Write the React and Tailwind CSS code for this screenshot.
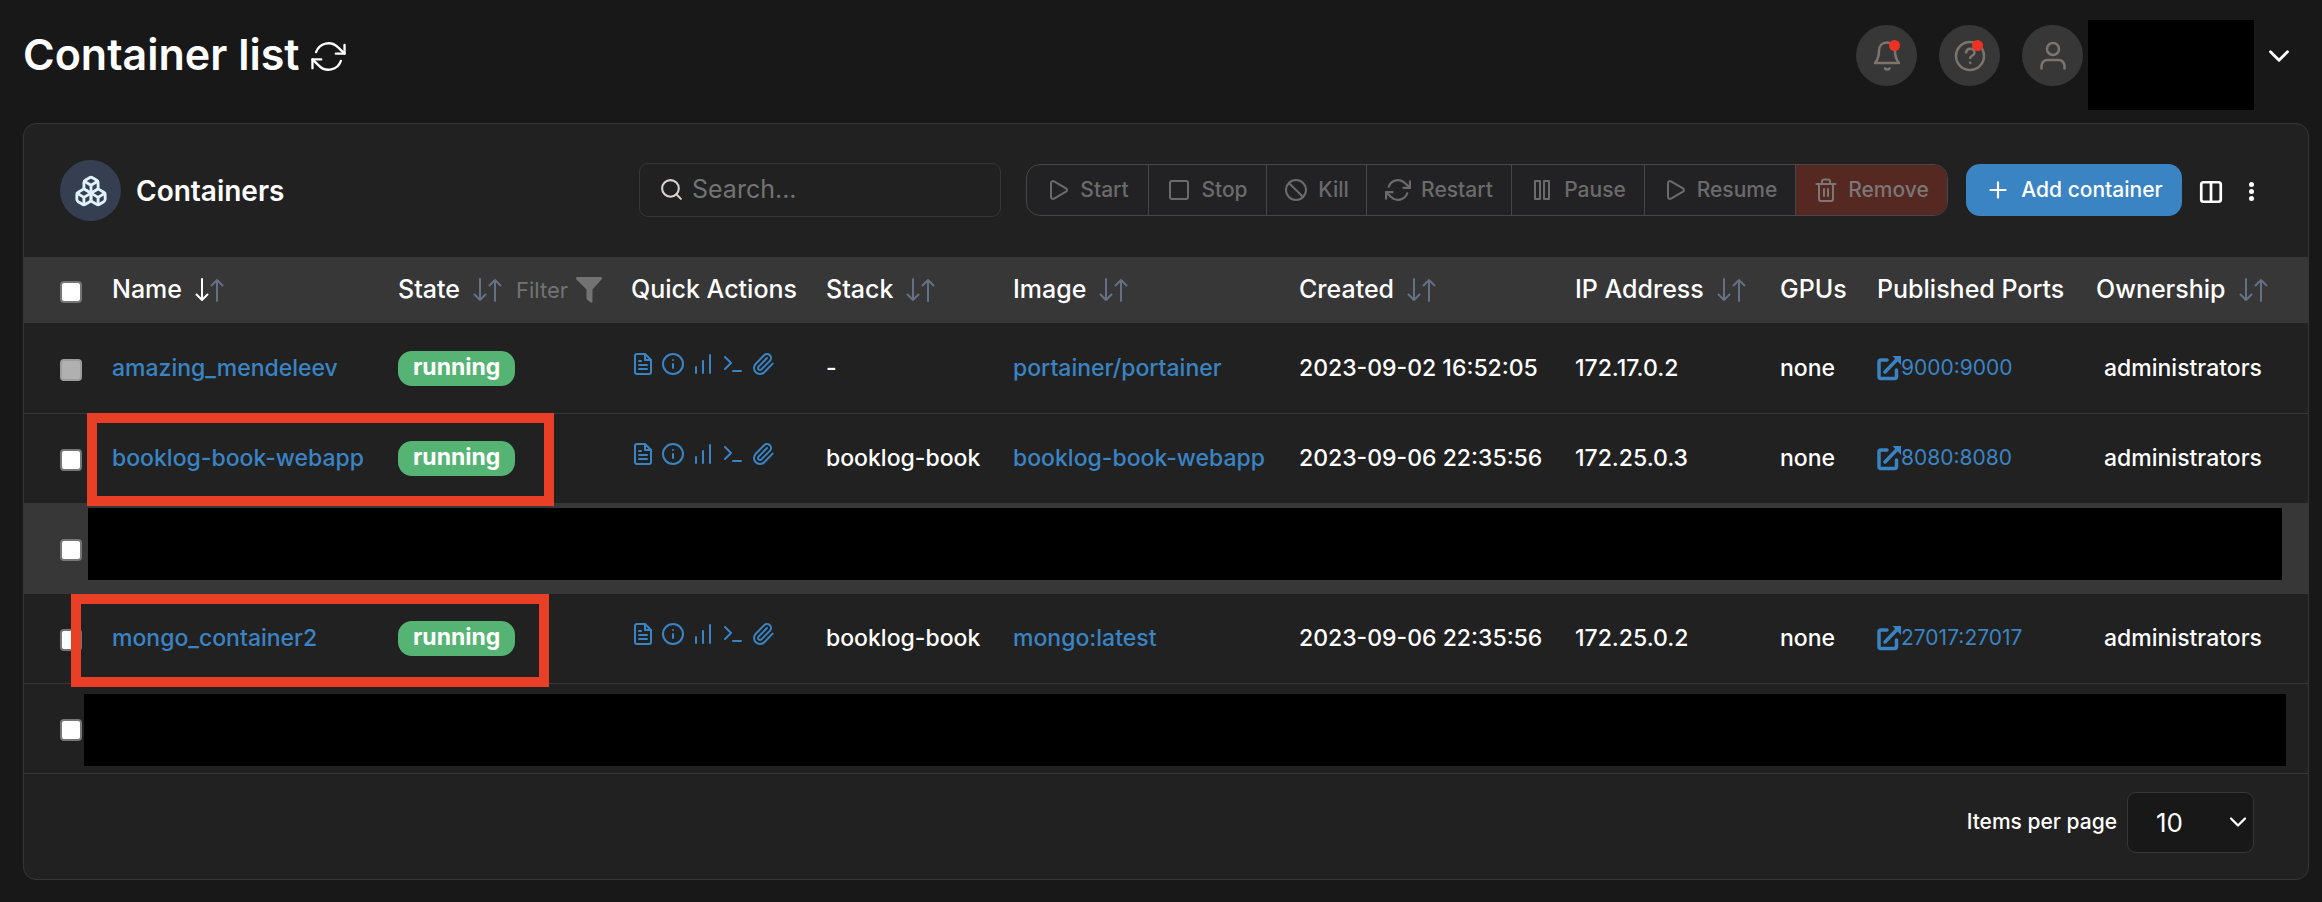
import { useState } from 'react';
import {
  Ban,
  Boxes,
  ChartNoAxesColumnIncreasing,
  ChevronDown,
  Columns2,
  Info,
  Paperclip,
  Play,
  Plus,
  Search,
  Square,
  Terminal,
} from 'lucide-react';

const CONTAINERS = [
  {
    id: 1,
    name: 'amazing_mendeleev',
    stack: '-',
    image: 'portainer/portainer',
    created: '2023-09-02 16:52:05',
    ip: '172.17.0.2',
    ports: '9000:9000',
    locked: true,
  },
  {
    id: 2,
    name: 'booklog-book-webapp',
    stack: 'booklog-book',
    image: 'booklog-book-webapp',
    created: '2023-09-06 22:35:56',
    ip: '172.25.0.3',
    ports: '8080:8080',
    mark: 'top-0 left-[63px] w-[467px]',
  },
  { id: 3, redacted: 'top-[5px] left-16 right-[26px]', active: true },
  {
    id: 4,
    name: 'mongo_container2',
    stack: 'booklog-book',
    image: 'mongo:latest',
    created: '2023-09-06 22:35:56',
    ip: '172.25.0.2',
    ports: '27017:27017',
    mark: 'top-px left-[47px] w-[478px]',
  },
  { id: 5, redacted: 'top-[11px] left-[60px] right-[22px]' },
];

function RefreshIcon({ size, strokeWidth = 2 }) {
  return (
    <svg width={size} height={size} viewBox="0 0 24 24" fill="none" stroke="currentColor" strokeWidth={strokeWidth} strokeLinecap="round" strokeLinejoin="round">
      <path d="M23 4v6h-6" />
      <path d="M1 20v-6h6" />
      <path d="M3.5 9a9 9 0 0 1 14.9-3.4L23 10" />
      <path d="M1 14l4.6 4.4A9 9 0 0 0 20.5 15" />
    </svg>
  );
}

function TrashIcon() {
  return (
    <svg width="24" height="24" viewBox="0 0 24 24" fill="none" stroke="currentColor" strokeWidth="2" strokeLinecap="round" strokeLinejoin="round">
      <path d="M2.5 6h19" />
      <path d="M19 6v15a2 2 0 0 1-2 2H7a2 2 0 0 1-2-2V6" />
      <path d="M8 6V3.5a2 2 0 0 1 2-2h4a2 2 0 0 1 2 2V6" />
      <path d="M10 11v7M14 11v7" />
    </svg>
  );
}

function PauseBars() {
  return (
    <svg width="24" height="24" viewBox="0 0 24 24" fill="none" stroke="currentColor" strokeWidth="2" strokeLinejoin="round">
      <rect x="5" y="3" width="5" height="18" />
      <rect x="14" y="3" width="5" height="18" />
    </svg>
  );
}

function LogsIcon() {
  return (
    <svg width="24" height="24" viewBox="0 0 24 24" fill="none" stroke="currentColor" strokeWidth="2" strokeLinecap="round" strokeLinejoin="round">
      <path d="M14 2H6a2 2 0 0 0-2 2v16a2 2 0 0 0 2 2h12a2 2 0 0 0 2-2V8z" />
      <path d="M14 2v6h6" />
      <path d="M8 9h2M8 13h8M8 17h8" />
    </svg>
  );
}

function BellIcon() {
  return (
    <svg width="32" height="32" viewBox="0 0 32 32" fill="none" stroke="currentColor" strokeWidth="2.5" strokeLinecap="round" strokeLinejoin="round">
      <path d="M16 2.5c-5 0-8 3.5-8 8.500 0 6-1.500 9-4 12h24c-2.500-3-4-6-4-12 0-5-3-8.500-8-8.500z" />
      <path d="M14 28.5c1.300 1.300 3.200 1.300 4.500 0" />
    </svg>
  );
}

function HelpIcon() {
  return (
    <svg width="32" height="32" viewBox="0 0 32 32" fill="none" stroke="currentColor" strokeWidth="2.5" strokeLinecap="round" strokeLinejoin="round">
      <circle cx="16" cy="16" r="14" />
      <path d="M12 12.500c.5-2.500 2-3.700 4.200-3.700 2.500 0 4.300 1.500 4.300 3.900 0 3-4.300 3-4.300 5.300" />
      <path d="M16.200 22.800v.1" />
    </svg>
  );
}

function UserIcon() {
  return (
    <svg width="32" height="32" viewBox="0 0 32 32" fill="none" stroke="currentColor" strokeWidth="2.5" strokeLinecap="round" strokeLinejoin="round">
      <circle cx="16" cy="9" r="6" />
      <path d="M4.500 28.500V26a6 6 0 0 1 6-6h11a6 6 0 0 1 6 6v2.500" />
    </svg>
  );
}

function FilterIcon() {
  return (
    <svg width="26" height="26" viewBox="0 0 26 26" fill="currentColor">
      <path d="M1.500 0h23c1.300 0 2 1.500 1 2.600L16.500 12.500V24c0 1.500-1 2-2.200 1.200l-3-2.400c-.5-.4-.8-.8-.8-1.400v-8.900L.5 2.600C-.5 1.500.2 0 1.500 0z" />
    </svg>
  );
}

function ExternalLinkIcon() {
  return (
    <svg width="24" height="26" viewBox="0 0 24 26" fill="none" stroke="currentColor" strokeWidth="3.5">
      <path d="M10 5H4a2 2 0 0 0-2 2v14.500a2 2 0 0 0 2 2h13.500a2 2 0 0 0 2-2V15" strokeLinecap="round" />
      <path d="M8 17L20 4.500" strokeLinecap="round" />
      <path d="M15.500 1H24v9z" fill="currentColor" stroke="none" />
    </svg>
  );
}

function SortArrows({ active }) {
  return (
    <svg width="30" height="24" viewBox="0 0 30 24" fill="none" strokeWidth="2" strokeLinecap="round" strokeLinejoin="round" className="stroke-[#667085]">
      <path d="M8 1v21M2.500 16.500L8 22l5.500-5.500" className={active ? 'stroke-white' : ''} />
      <path d="M23 23V2M17.500 7.500L23 2l5.500 5.500" />
    </svg>
  );
}

function HeaderCell({ label, className, sort, children }) {
  return (
    <th scope="col" className={`p-0 text-left text-[25px] font-medium ${className}`}>
      <div className="flex items-center gap-1.5">
        <button type="button" className="flex items-center gap-3">
          {label}
          {sort && <SortArrows active={sort === 'active'} />}
        </button>
        {children}
      </div>
    </th>
  );
}

function RowCheckbox({ label, disabled }) {
  return (
    <input
      type="checkbox"
      aria-label={label}
      disabled={disabled}
      className="mt-1 block size-[22px] appearance-none rounded-[4px] border-2 border-[#767676] bg-white disabled:border-[#9c9c9c] disabled:bg-[#b0b0b0]"
    />
  );
}

function QuickActions() {
  return (
    <div className="mb-2 flex gap-1.5 text-[#3a84c4]">
      <a href="#logs" aria-label="Logs"><LogsIcon /></a>
      <a href="#inspect" aria-label="Inspect"><Info size={24} /></a>
      <a href="#stats" aria-label="Stats"><ChartNoAxesColumnIncreasing size={24} /></a>
      <a href="#exec" aria-label="Exec console"><Terminal size={24} /></a>
      <a href="#attach" aria-label="Attach console"><Paperclip size={24} /></a>
    </div>
  );
}

function ContainerRow({ item }) {
  if (item.redacted) {
    return (
      <tr className={`relative h-[90px] border-b border-[#373737] ${item.active ? 'bg-[#373737]' : ''}`}>
        <td className="p-0 pl-9">
          <RowCheckbox label={`Select container ${item.id}`} />
        </td>
        <td colSpan={10} className="p-0">
          <div className={`absolute h-[72px] bg-black ${item.redacted}`} />
        </td>
      </tr>
    );
  }

  return (
    <tr className="relative h-[90px] border-b border-[#373737] font-medium">
      <td className="p-0 pl-9">
        <RowCheckbox label={`Select ${item.name}`} disabled={item.locked} />
      </td>
      <td className="p-0">
        <a href="#container" className="text-[#3a84c4]">{item.name}</a>
        {item.mark && (
          <div className={`pointer-events-none absolute z-10 h-[93px] border-10 border-[#e93f26] ${item.mark}`} />
        )}
      </td>
      <td className="p-0">
        <span className="inline-block h-[35px] rounded-[14px] bg-[#55b473] px-[15px] leading-8 font-bold text-white">running</span>
      </td>
      <td className="p-0"><QuickActions /></td>
      <td className="p-0">{item.stack}</td>
      <td className="p-0"><a href="#image" className="text-[#3a84c4]">{item.image}</a></td>
      <td className="p-0">{item.created}</td>
      <td className="p-0">{item.ip}</td>
      <td className="p-0">none</td>
      <td className="p-0">
        <a href="#port" className="flex items-center text-[21px] font-normal text-[#3a84c4]">
          <ExternalLinkIcon />
          {item.ports}
        </a>
      </td>
      <td className="p-0 pl-2">administrators</td>
    </tr>
  );
}

function ActionButton({ icon, label, className = '' }) {
  return (
    <button
      type="button"
      disabled
      className={`flex h-full items-center justify-center gap-2.5 border-l border-[#474747] text-[#6b6b6b] first:border-l-0 ${className}`}
    >
      {icon}
      {label}
    </button>
  );
}

function RoundButton({ label, children, dot }) {
  return (
    <button type="button" aria-label={label} className="relative flex size-[61px] items-center justify-center rounded-full bg-[#373737] text-[#7d746d]">
      {children}
      {dot && <span className="absolute top-[15px] right-[17px] size-[11px] rounded-full bg-[#ec3323]" />}
    </button>
  );
}

export default function App() {
  const [query, setQuery] = useState('');
  const [pageSize, setPageSize] = useState('10');

  return (
    <div className="min-h-screen bg-[#181818] pr-[13px] pb-4 pl-[23px] font-['Inter',sans-serif] text-[23px] text-white">
      <header className="flex h-[123px] items-start justify-between pt-5 pr-[13px]">
        <h1 className="flex items-center gap-3 pt-1.5 text-[43px] leading-[56px] font-semibold">
          Container list
          <button type="button" aria-label="Refresh" className="mt-1">
            <RefreshIcon size={35} strokeWidth={1.6} />
          </button>
        </h1>
        <div className="flex">
          <div className="flex gap-[22px] pt-[5px] pr-[5px]">
            <RoundButton label="Notifications" dot><BellIcon /></RoundButton>
            <RoundButton label="Help" dot><HelpIcon /></RoundButton>
            <RoundButton label="Account"><UserIcon /></RoundButton>
          </div>
          <div className="h-[90px] w-[166px] bg-black" />
          <button type="button" aria-label="Account menu" className="ml-2 flex h-[72px] items-center">
            <ChevronDown size={34} strokeWidth={2} />
          </button>
        </div>
      </header>

      <main className="overflow-hidden rounded-[13px] border border-[#373737] bg-[#212121]">
        <div className="flex h-[133px] items-center justify-between pr-[47px] pl-9">
          <div className="flex items-center gap-[15px]">
            <span className="flex size-[61px] items-center justify-center rounded-full bg-[#363f52] text-[#e0f2fe]">
              <Boxes size={34} strokeWidth={2} />
            </span>
            <h2 className="text-[28px] font-semibold">Containers</h2>
          </div>

          <div className="flex items-center pb-0.5 text-[21px] font-medium">
            <label className="mr-[25px] flex h-[54px] w-[362px] items-center gap-2 rounded-[9px] border border-[#373737] pl-[19px]">
              <Search size={25} strokeWidth={2} className="text-[#d6d3d1]" />
              <input
                type="text"
                aria-label="Search"
                placeholder="Search..."
                value={query}
                onChange={(e) => setQuery(e.target.value)}
                className="min-w-0 flex-1 bg-transparent text-[25px] font-normal placeholder-[#737373] outline-none"
              />
            </label>

            <div className="mr-[18px] flex h-[52px] overflow-hidden rounded-[14px] border border-[#474747] bg-[#222224]">
              <ActionButton icon={<Play size={24} />} label="Start" className="w-[121px]" />
              <ActionButton icon={<Square size={24} />} label="Stop" className="w-[118px]" />
              <ActionButton icon={<Ban size={24} />} label="Kill" className="w-[100px]" />
              <ActionButton icon={<RefreshIcon size={26} />} label="Restart" className="w-[145px]" />
              <ActionButton icon={<PauseBars />} label="Pause" className="w-[133px]" />
              <ActionButton icon={<Play size={24} />} label="Resume" className="w-[151px]" />
              <ActionButton icon={<TrashIcon />} label="Remove" className="w-[152px] border-[#7a2f28] bg-[#552822] text-[#7c7675]" />
            </div>

            <button type="button" className="mr-4 flex h-[52px] w-[216px] items-center justify-center gap-2.5 rounded-[14px] bg-[#3a84c4]">
              <Plus size={26} strokeWidth={2} />
              Add container
            </button>
            <button type="button" aria-label="Columns" className="mt-1">
              <Columns2 size={26} strokeWidth={2.5} />
            </button>
            <button type="button" aria-label="Table settings" className="mt-1 ml-[17px] flex w-5 flex-col items-center gap-0.5">
              <span className="size-[5px] rounded-full bg-white" />
              <span className="size-[5px] rounded-full bg-white" />
              <span className="size-[5px] rounded-full bg-white" />
            </button>
          </div>
        </div>

        <table className="w-full table-fixed border-collapse whitespace-nowrap">
          <thead>
            <tr className="h-[66px] bg-[#373737]">
              <th scope="col" className="w-[88px] p-0 pl-9">
                <RowCheckbox label="Select all" />
              </th>
              <HeaderCell label="Name" sort="active" className="w-[286px]" />
              <HeaderCell label="State" sort="idle" className="w-[233px]">
                <button type="button" className="ml-2 flex items-center gap-2 text-[22px] font-normal text-[#737373]">
                  Filter
                  <FilterIcon />
                </button>
              </HeaderCell>
              <HeaderCell label="Quick Actions" className="w-[195px]" />
              <HeaderCell label="Stack" sort="idle" className="w-[187px]" />
              <HeaderCell label="Image" sort="idle" className="w-[286px]" />
              <HeaderCell label="Created" sort="idle" className="w-[276px]" />
              <HeaderCell label="IP Address" sort="idle" className="w-[205px]" />
              <HeaderCell label="GPUs" className="w-[97px]" />
              <HeaderCell label="Published Ports" className="w-[219px]" />
              <HeaderCell label="Ownership" sort="idle" className="w-[212px]" />
            </tr>
          </thead>
          <tbody>
            {CONTAINERS.map((item) => (
              <ContainerRow key={item.id} item={item} />
            ))}
          </tbody>
        </table>

        <footer className="flex h-[105px] items-center justify-end gap-2.5 pr-[54px] pb-2">
          <label htmlFor="page-size" className="text-[21px] font-medium">Items per page</label>
          <div className="relative">
            <select
              id="page-size"
              value={pageSize}
              onChange={(e) => setPageSize(e.target.value)}
              className="block h-[61px] w-[127px] appearance-none rounded-[9px] border border-[#373737] bg-[#181818] pl-7 text-[26px]"
            >
              <option>10</option>
              <option>25</option>
              <option>50</option>
              <option>100</option>
            </select>
            <ChevronDown size={28} strokeWidth={2} className="pointer-events-none absolute top-4 right-0.5" />
          </div>
        </footer>
      </main>
    </div>
  );
}
